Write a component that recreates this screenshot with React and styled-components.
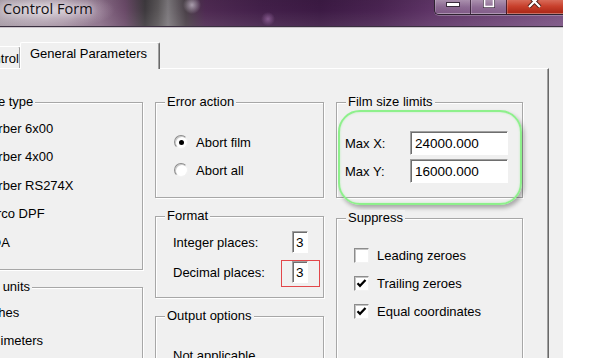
import React from 'react'
import styled, { createGlobalStyle } from 'styled-components'

const GlobalStyle = createGlobalStyle`
  html, body {
    margin: 0;
    padding: 0;
    background: #fff;
  }
  body {
    font-family: "Liberation Sans", Arial, sans-serif;
    font-size: 13px;
    color: #000;
  }
`

const Screen = styled.div`
  width: 591px;
  height: 358px;
  overflow: hidden;
  background: #fff;
`

const Window = styled.div`
  width: 563px;
  height: 358px;
  overflow: hidden;
  background: #f0f0f0;
  display: flex;
  flex-direction: column;
`

const TitleBar = styled.div`
  flex: none;
  height: 26px;
  display: flex;
  justify-content: space-between;
  align-items: flex-start;
  position: relative;
  z-index: 3;
  border-bottom: 1px solid #3a3040;
  box-shadow: 0 1px 0 #cbc5cb;
  background:
    radial-gradient(ellipse 70px 20px at 45px 10px, rgba(235, 228, 235, 0.75), rgba(235, 228, 235, 0) 100%),
    radial-gradient(circle 9px at 192px 5px, rgba(210, 200, 215, 0.7), rgba(210, 200, 215, 0) 100%),
    radial-gradient(circle 7px at 268px 19px, rgba(170, 120, 180, 0.6), rgba(170, 120, 180, 0) 100%),
    linear-gradient(180deg, rgba(0, 0, 0, 0.05), rgba(0, 0, 0, 0) 40%, rgba(255, 255, 255, 0.08)),
    linear-gradient(90deg, #a397a2 0px, #9a8597 60px, #8a6e88 100px, #6a4a68 125px, #3e3a3e 145px,
      #5a5658 158px, #7c787c 168px, #4a4048 186px, #4e2a52 205px, #43204a 260px, #3c1a44 320px,
      #4a2452 380px, #5e3466 430px, #7a5282 563px);
`

const Title = styled.div`
  padding-left: 3px;
  font-family: "Open Sans", "Noto Sans", sans-serif;
  font-size: 14.5px;
  line-height: 18px;
  color: #141014;
  text-shadow: 0 0 6px rgba(255, 255, 255, 0.9), 0 0 12px rgba(255, 255, 255, 0.6);
`

const Controls = styled.div`
  display: flex;
  height: 14px;
  border: 1px solid #2e2230;
  border-top: none;
  border-right: none;
  border-radius: 0 0 0 5px;
  overflow: hidden;
  box-shadow: 0 1px 0 rgba(255, 255, 255, 0.25);
`

const CtrlButton = styled.div`
  width: ${p => p.$w}px;
  display: flex;
  justify-content: center;
  align-items: flex-start;
  border-left: ${p => (p.$first ? 'none' : '1px solid rgba(40, 20, 40, 0.75)')};
  box-shadow: inset 0 -1px 0 rgba(255, 255, 255, 0.35), inset 1px 0 0 rgba(255, 255, 255, 0.2);
  background: ${p =>
    p.$close
      ? 'linear-gradient(180deg, #d86a58 0%, #c8402c 45%, #a82414 100%)'
      : 'linear-gradient(180deg, rgba(230, 215, 230, 0.55) 0%, rgba(190, 165, 195, 0.45) 50%, rgba(150, 115, 155, 0.5) 100%)'};
`

const Body = styled.div`
  flex: 1;
  display: flex;
  flex-direction: column;
  margin-left: -60px;
  padding-top: 15px;
`

const TabStrip = styled.div`
  flex: none;
  height: 26px;
  display: flex;
  align-items: flex-end;
  padding-left: 28px;
`

const Tab = styled.div`
  box-sizing: border-box;
  width: ${p => p.$w}px;
  height: ${p => (p.$active ? 27 : 22)}px;
  margin-right: ${p => (p.$active ? 0 : -1)}px;
  margin-bottom: ${p => (p.$active ? -1 : 0)}px;
  padding: ${p => (p.$active ? 3 : 4)}px 0 0 ${p => p.$pad}px;
  position: relative;
  z-index: ${p => (p.$active ? 2 : 1)};
  background: #f0f0f0;
  border: 1px solid;
  border-color: #fff #696969 transparent #fff;
  border-bottom: none;
  border-radius: 2px 2px 0 0;
  box-shadow: inset -1px 0 0 #a0a0a0;
  line-height: 16px;
  white-space: nowrap;
`

const Panel = styled.div`
  box-sizing: border-box;
  width: 609px;
  flex: 1;
  display: flex;
  align-items: flex-start;
  gap: 12px;
  padding: 33px 25px 0 7px;
  border-top: 1px solid #fff;
  border-left: 1px solid #fff;
  border-right: 1px solid #696969;
  box-shadow: inset -1px 0 0 #a0a0a0;
`

const Column = styled.div`
  flex: none;
  width: ${p => p.$w}px;
  display: flex;
  flex-direction: column;
  gap: ${p => p.$gap}px;
`

const Group = styled.div`
  box-sizing: border-box;
  position: relative;
  height: ${p => p.$h}px;
  padding: ${p => p.$pt}px ${p => p.$pr || 0}px 0 ${p => p.$pl}px;
  border: 1px solid #a7a7a7;
  box-shadow: inset 1px 1px 0 #fff, 1px 1px 0 #fff;
  display: flex;
  flex-direction: column;
  gap: ${p => p.$gap || 0}px;
`

const Legend = styled.span`
  position: absolute;
  top: -9px;
  left: ${p => (p.$left !== undefined ? p.$left : 9)}px;
  padding: 0 2px;
  background: #f0f0f0;
  line-height: 16px;
  white-space: nowrap;
`

const OptionRow = styled.label`
  display: flex;
  align-items: center;
  gap: 8px;
  height: ${p => p.$h}px;
  white-space: nowrap;
  flex: none;
`

const RadioMark = styled.span`
  box-sizing: border-box;
  flex: none;
  width: 14px;
  height: 14px;
  border-radius: 50%;
  border: 1px solid;
  border-color: #8c8c8c #f2f2f2 #f2f2f2 #8c8c8c;
  box-shadow: inset 1px 1px 0 #cacaca;
  background: #fff;
  display: flex;
  align-items: center;
  justify-content: center;

  &::after {
    content: '';
    width: 5px;
    height: 5px;
    border-radius: 50%;
    background: ${p => (p.$on ? '#000' : 'transparent')};
  }
`

const CheckMark = styled.span`
  box-sizing: border-box;
  flex: none;
  width: 15px;
  height: 15px;
  border: 1px solid;
  border-color: #8c8c8c #f2f2f2 #f2f2f2 #8c8c8c;
  box-shadow: inset 1px 1px 0 #c4c4c4;
  background: #fff;
  display: flex;
  align-items: center;
  justify-content: center;
`

const FieldRow = styled.div`
  display: flex;
  align-items: center;
  justify-content: space-between;
  height: ${p => p.$h}px;
  flex: none;
`

const FieldLabel = styled.span`
  flex: ${p => (p.$w ? `0 0 ${p.$w}px` : '0 1 auto')};
  white-space: nowrap;
`

const EditBox = styled.span`
  box-sizing: border-box;
  position: relative;
  flex: none;
  display: flex;
  align-items: center;
  width: ${p => p.$w}px;
  height: ${p => p.$h}px;
  padding-left: ${p => p.$pl}px;
  border: 1px solid;
  border-color: #a0a0a0 #fff #fff #a0a0a0;
  box-shadow: inset 1px 1px 0 #6e6e6e;
  background: #fff;
  font-size: 13.5px;
`

const RedMark = styled.span`
  position: absolute;
  left: -12px;
  top: -2px;
  width: 39px;
  height: 27px;
  box-sizing: border-box;
  border: 1px solid #e2474a;
  pointer-events: none;
`

const GreenHighlight = styled.div`
  position: absolute;
  left: 1px;
  top: 7px;
  width: 184px;
  height: 95px;
  box-sizing: border-box;
  border: 2px solid #8ef08c;
  border-radius: 22px;
  box-shadow: 2px 3px 4px rgba(0, 0, 0, 0.3), inset 0 0 2px rgba(142, 240, 140, 0.6);
  pointer-events: none;
`

const NotApplicable = styled.div`
  line-height: 16px;
  padding-left: 17px;
  white-space: nowrap;
`

function Radio({ label, on, h = 28 }) {
  return (
    <OptionRow $h={h}>
      <RadioMark $on={on} />
      <span>{label}</span>
    </OptionRow>
  )
}

function Check({ label, on }) {
  return (
    <OptionRow $h={28}>
      <CheckMark>
        {on && (
          <svg width="11" height="11" viewBox="0 0 11 11">
            <polyline points="1.5,5.2 4,7.8 9.5,2" fill="none" stroke="#000" strokeWidth="2.2" strokeLinejoin="miter" />
          </svg>
        )}
      </CheckMark>
      <span>{label}</span>
    </OptionRow>
  )
}

const machineTypes = ['Gerber 6x00', 'Gerber 4x00', 'Gerber RS274X', 'Barco DPF', 'MDA']

export default function App() {
  return (
    <Screen>
      <GlobalStyle />
      <Window>
        <TitleBar>
          <Title>Control Form</Title>
          <Controls>
            <CtrlButton $w={35} $first>
              <svg width="14" height="7" viewBox="0 0 14 7">
                <rect x="0.5" y="2.5" width="13" height="4" fill="#fff" stroke="#3a2a3c" />
              </svg>
            </CtrlButton>
            <CtrlButton $w={35}>
              <svg width="12" height="8" viewBox="0 0 12 8">
                <rect x="0.5" y="-3.5" width="11" height="11" fill="none" stroke="#3a2a3c" />
                <rect x="1.5" y="-2.5" width="9" height="9" fill="none" stroke="#fff" strokeWidth="1.6" />
              </svg>
            </CtrlButton>
            <CtrlButton $w={56} $close>
              <svg width="16" height="8" viewBox="0 0 16 8">
                <path d="M2 -4 L13 7 M13 -4 L2 7" stroke="#4a1a14" strokeWidth="4" />
                <path d="M2 -4 L13 7 M13 -4 L2 7" stroke="#fff" strokeWidth="2.2" />
              </svg>
            </CtrlButton>
          </Controls>
        </TitleBar>

        <Body>
          <TabStrip>
            <Tab $w={53} $pad={8}>Control</Tab>
            <Tab $w={140} $pad={9} $active>General Parameters</Tab>
          </TabStrip>

          <Panel>
            <Column $w={195} $gap={17}>
              <Group $h={168} $pt={11} $pl={10}>
                <Legend $left={5}>Machine type</Legend>
                {machineTypes.map((t, i) => (
                  <Radio key={t} label={t} on={i === 0} h={28.5} />
                ))}
              </Group>
              <Group $h={110} $pt={10} $pl={10}>
                <Legend>Output units</Legend>
                <Radio label="Inches" on />
                <Radio label="Millimeters" />
              </Group>
            </Column>

            <Column $w={169} $gap={18}>
              <Group $h={96} $pt={25} $pl={18}>
                <Legend>Error action</Legend>
                <Radio label="Abort film" on />
                <Radio label="Abort all" />
              </Group>
              <Group $h={82} $pt={14} $pl={17} $pr={15} $gap={8}>
                <Legend>Format</Legend>
                <FieldRow $h={22}>
                  <FieldLabel>Integer places:</FieldLabel>
                  <EditBox $w={16} $h={22} $pl={3}>3</EditBox>
                </FieldRow>
                <FieldRow $h={22}>
                  <FieldLabel>Decimal places:</FieldLabel>
                  <EditBox $w={16} $h={22} $pl={3}>
                    3
                    <RedMark />
                  </EditBox>
                </FieldRow>
              </Group>
              <Group $h={80} $pt={31} $pl={0}>
                <Legend>Output options</Legend>
                <NotApplicable>Not applicable</NotApplicable>
              </Group>
            </Column>

            <Column $w={187} $gap={20}>
              <Group $h={96} $pt={28} $pl={8} $pr={14} $gap={4}>
                <Legend>Film size limits</Legend>
                <FieldRow $h={24}>
                  <FieldLabel $w={65}>Max X:</FieldLabel>
                  <EditBox $w={98} $h={24} $pl={4}>24000.000</EditBox>
                </FieldRow>
                <FieldRow $h={24}>
                  <FieldLabel $w={65}>Max Y:</FieldLabel>
                  <EditBox $w={98} $h={24} $pl={4}>16000.000</EditBox>
                </FieldRow>
                <GreenHighlight />
              </Group>
              <Group $h={150} $pt={22} $pl={17}>
                <Legend>Suppress</Legend>
                <Check label="Leading zeroes" />
                <Check label="Trailing zeroes" on />
                <Check label="Equal coordinates" on />
              </Group>
            </Column>
          </Panel>
        </Body>
      </Window>
    </Screen>
  )
}
